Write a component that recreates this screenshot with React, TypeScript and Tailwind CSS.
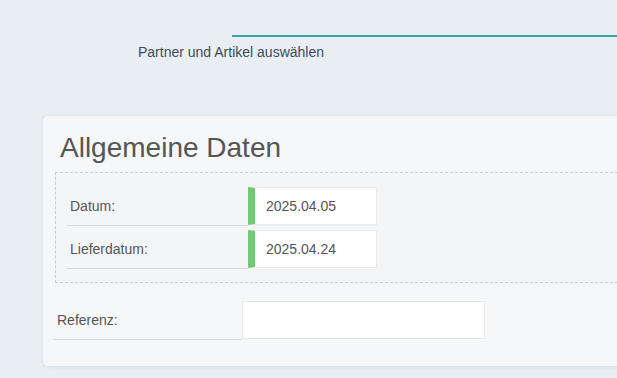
import React from "react";

export default function App() {
  const font = { fontFamily: '"Liberation Sans", Arial, sans-serif' };
  return (
    <div
      className="w-[617px] h-[378px] overflow-hidden bg-[#e9eef2]"
      style={font}
    >
      {/* stepper header */}
      <div className="pt-[35px]">
        <div className="ml-[232px] h-[2px] w-[500px] bg-[#3aa3a6]" />
        <div className="ml-[138px] mt-[6px] text-[14px] leading-[18px] text-[#3d4b5c]">
          Partner und Artikel auswählen
        </div>
      </div>

      {/* card */}
      <div className="mt-[55px] ml-[43px] w-[620px] h-[250px] rounded-[5px] bg-[#f5f7f8] shadow-[0_1px_4px_rgba(0,0,0,0.08)] pt-[16px] pl-[10px]">
        <h2 className="pl-[7px] text-[28px] leading-[32px] text-[#555555]">
          Allgemeine Daten
        </h2>

        <div className="mt-[8px] ml-[2px] border border-dashed border-[#c9cacc] bg-[#f4f5f7] pt-[14px] pb-[13px] pl-[10px] flex flex-col gap-[4px]">
          <Row label="Datum:" value="2025.04.05" />
          <Row label="Lieferdatum:" value="2025.04.24" />
        </div>

        <div className="mt-[18px] flex items-start">
          <div className="w-[189px] h-[39px] border-b border-[#d6d9dc] pl-[4px] flex items-center text-[14px] text-[#555]">
            Referenz:
          </div>
          <div className="w-[243px] h-[38px] bg-white border border-[#e6e8ea]" />
        </div>
      </div>
    </div>
  );
}

function Row({ label, value }: { label: string; value: string }) {
  return (
    <div className="flex items-start">
      <div className="w-[182px] h-[39px] border-b border-[#d6d9dc] pl-[4px] flex items-center text-[14px] text-[#555]">
        {label}
      </div>
      <div className="w-[129px] h-[38px] bg-white border border-[#ebebeb] border-l-[7px] border-l-[#73c873] pl-[11px] flex items-center text-[14px] text-[#555]">
        {value}
      </div>
    </div>
  );
}
